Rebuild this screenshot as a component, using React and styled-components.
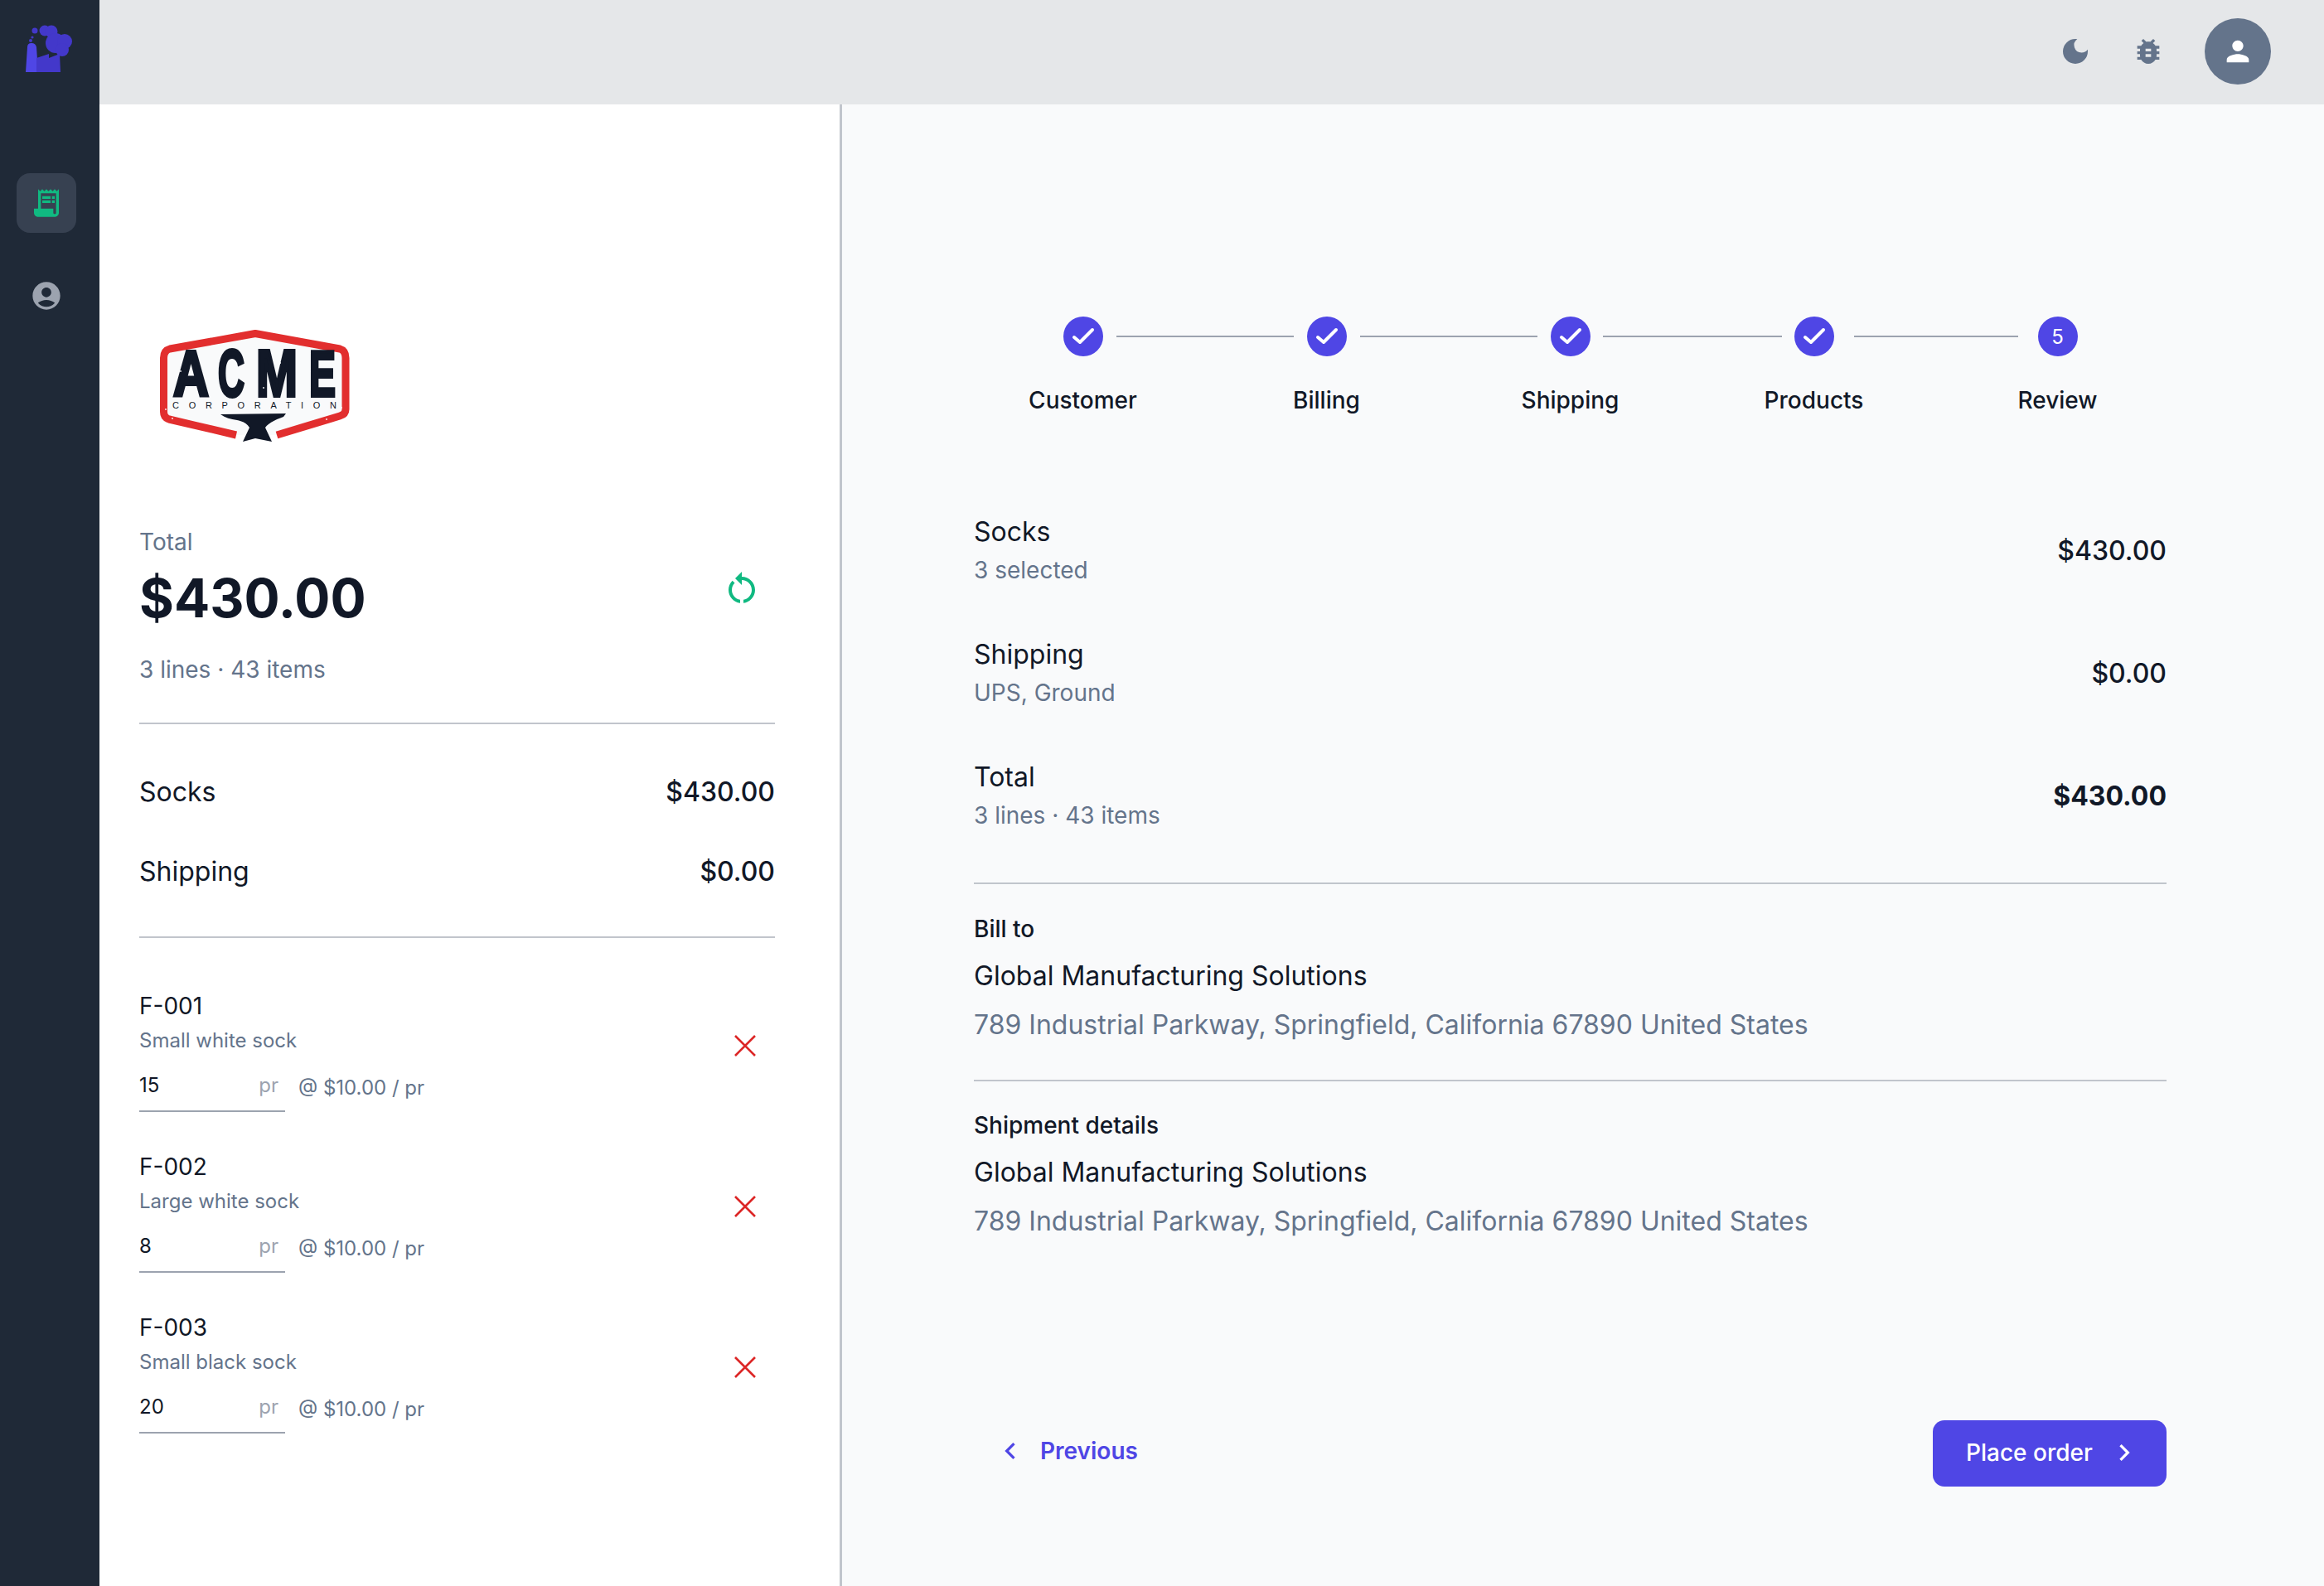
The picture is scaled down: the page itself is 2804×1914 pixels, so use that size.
import React from "react";
import styled, { createGlobalStyle } from "styled-components";
import {
  MdDarkMode,
  MdBugReport,
  MdPerson,
  MdAccountCircle,
  MdReceiptLong,
  MdRestartAlt,
  MdChevronLeft,
  MdChevronRight,
} from "react-icons/md";

const GlobalStyle = createGlobalStyle`
  html, body {
    margin: 0;
    padding: 0;
    height: 100%;
    font-family: Inter, "Liberation Sans", sans-serif;
    color: #111827;
    background: #f9fafb;
  }
  * { box-sizing: border-box; }
`;

const Shell = styled.div`
  display: flex;
  width: 2804px;
  height: 1914px;
  overflow: hidden;
`;

const Sidebar = styled.nav`
  width: 120px;
  flex-shrink: 0;
  background: #1f2937;
  display: flex;
  flex-direction: column;
  align-items: flex-start;
  padding-left: 20px;
`;

const LogoSlot = styled.div`
  height: 209px;
  width: 100%;
  padding: 30px 0 0 10px;
`;

const NavItem = styled.div`
  width: 72px;
  height: 72px;
  border-radius: 16px;
  display: flex;
  align-items: center;
  justify-content: center;
  margin-bottom: 40px;
  background: ${(p) => (p.$active ? "#374151" : "transparent")};
  color: ${(p) => (p.$active ? "#10b981" : "#9ca3af")};
  font-size: 40px;
`;

const Main = styled.div`
  flex: 1;
  display: flex;
  flex-direction: column;
  min-width: 0;
`;

const TopBar = styled.header`
  height: 126px;
  flex-shrink: 0;
  background: #e5e7e9;
  display: flex;
  align-items: center;
  justify-content: flex-end;
  padding: 0 64px 2px 0;
  color: #64748b;
`;

const TopIcon = styled.div`
  display: flex;
  font-size: 40px;
  margin-right: ${(p) => p.$mr}px;
`;

const Avatar = styled.div`
  width: 80px;
  height: 80px;
  border-radius: 50%;
  background: #64748b;
  color: #fff;
  display: flex;
  align-items: center;
  justify-content: center;
  font-size: 40px;
`;

const Columns = styled.div`
  flex: 1;
  display: flex;
  min-height: 0;
`;

const LeftPanel = styled.section`
  width: 896px;
  flex-shrink: 0;
  background: #fff;
  border-right: 3px solid #c1c5cc;
  padding: 272px 78px 0 48px;
`;

const LogoWrap = styled.div`
  height: 140px;
  margin: 0 0 96px 20px;
`;

const TotalLabel = styled.div`
  font-size: 28px;
  line-height: 40px;
  color: #64748b;
`;

const TotalRow = styled.div`
  display: flex;
  align-items: center;
  justify-content: space-between;
  padding-right: 16px;
  color: #10b981;

  svg {
    margin-bottom: 16px;
  }
`;

const TotalAmount = styled.div`
  font-size: 64px;
  line-height: 80px;
  font-weight: 700;
  color: #111827;
  margin-top: 8px;
`;

const Muted = styled.div`
  font-size: 28px;
  line-height: 40px;
  color: #64748b;
  margin-top: ${(p) => p.$mt || 0}px;
`;

const Divider = styled.hr`
  border: 0;
  height: 2px;
  background: #c1c5cc;
  margin: ${(p) => p.$m};
`;

const SummaryRow = styled.div`
  display: flex;
  justify-content: space-between;
  font-size: 32px;
  line-height: 48px;
  margin-bottom: 48px;
`;

const Amount = styled.span`
  font-weight: 500;
`;

const Line = styled.div`
  display: flex;
  justify-content: space-between;
  align-items: center;
  height: 194px;
`;

const Sku = styled.div`
  font-size: 28px;
  line-height: 40px;
`;

const Desc = styled.div`
  font-size: 24px;
  line-height: 36px;
  color: #64748b;
  margin-top: 4px;
`;

const QtyRow = styled.div`
  display: flex;
  align-items: flex-end;
  margin-top: 8px;
`;

const QtyInput = styled.div`
  width: 176px;
  height: 60px;
  border-bottom: 2px solid #9ca3af;
  display: flex;
  justify-content: space-between;
  align-items: center;
  font-size: 24px;
  padding: 0 8px 4px 0;
`;

const Unit = styled.span`
  color: #9ca3af;
`;

const Price = styled.div`
  font-size: 24px;
  line-height: 36px;
  color: #64748b;
  margin: 0 0 11px 16px;
`;

const RemoveButton = styled.button`
  border: 0;
  background: none;
  padding: 0;
  margin: 0 22px 12px 0;
  display: flex;
`;

const RightPanel = styled.section`
  flex: 1;
  background: #f9fafb;
  padding: 256px 190px 0 159px;
`;

const Stepper = styled.div`
  margin: 0 -16px;
`;

const StepDots = styled.div`
  display: flex;
  align-items: center;
  justify-content: center;
`;

const Dot = styled.div`
  width: 48px;
  height: 48px;
  border-radius: 50%;
  background: #4f46e5;
  color: #fff;
  font-size: 24px;
  display: flex;
  align-items: center;
  justify-content: center;
  flex-shrink: 0;
`;

const Connector = styled.div`
  width: ${(p) => p.$w}px;
  margin: 0 ${(p) => (246 - p.$w) / 2}px;
  height: 2px;
  background: #9ca3af;
`;

const StepLabels = styled.div`
  display: grid;
  grid-template-columns: repeat(5, 294px);
  justify-content: center;
  margin-top: 33px;
`;

const StepLabel = styled.div`
  font-size: 28px;
  line-height: 40px;
  font-weight: 500;
  text-align: center;
`;

const CostList = styled.div`
  margin-top: 88px;
`;

const CostRow = styled.div`
  display: flex;
  justify-content: space-between;
  align-items: center;
  height: 148px;
`;

const CostText = styled.div`
  padding-bottom: 4px;

  ${Muted} {
    margin-top: 2px;
  }
`;

const CostName = styled.div`
  font-size: 32px;
  line-height: 48px;
`;

const CostValue = styled.div`
  font-size: 32px;
  line-height: 48px;
  font-weight: ${(p) => (p.$bold ? 700 : 500)};
`;

const AddressTitle = styled.div`
  font-size: 28px;
  line-height: 40px;
  font-weight: 500;
`;

const AddressName = styled.div`
  font-size: 32px;
  line-height: 48px;
  margin-top: 13px;
`;

const AddressText = styled.div`
  font-size: 32px;
  line-height: 48px;
  color: #64748b;
  margin-top: 11px;
`;

const Footer = styled.div`
  display: flex;
  align-items: center;
  justify-content: space-between;
  margin-top: 216px;
`;

const PrevLink = styled.button`
  border: 0;
  background: none;
  padding: 0 0 6px 24px;
  display: flex;
  align-items: center;
  gap: 16px;
  color: #4f46e5;
  font: 600 28px/40px Inter, sans-serif;
`;

const PlaceButton = styled.button`
  width: 282px;
  height: 80px;
  border: 0;
  border-radius: 14px;
  background: #4f46e5;
  color: #fff;
  display: flex;
  align-items: center;
  padding: 0 0 2px 40px;
  gap: 18px;
  font: 500 28px/40px Inter, sans-serif;
`;

const FactoryLogo = () => (
  <svg width="60" height="62" viewBox="30 30 60 62">
    <path fill="#4f46e5" d="M31 87 L33 57 Q33 52 38 52 Q43 52 44 57 L46 87 Z" />
    <path fill="#4338ca" d="M44 87 V70 L59 65 V70 L72 65 L73 87 Z" />
    <g fill="#4338ca">
      <circle cx="42" cy="37" r="3.5" />
      <circle cx="37" cy="49" r="2" />
      <circle cx="39" cy="45" r="1.6" />
      <circle cx="54" cy="37" r="6.5" />
      <circle cx="62" cy="38" r="7.5" />
      <circle cx="67" cy="52" r="12" />
      <circle cx="78" cy="50" r="9" />
      <circle cx="75" cy="60" r="8" />
    </g>
  </svg>
);

const acmeLetters = [
  { ch: "A", x: 21, w: 43, size: 78 },
  { ch: "C", x: 75, w: 32, size: 80 },
  { ch: "M", x: 121, w: 50, size: 80 },
  { ch: "E", x: 185, w: 32, size: 78 },
];

const specks = [
  [12, 96], [20, 107], [224, 94], [206, 108], [30, 50], [90, 58], [150, 40], [200, 66], [130, 70],
];

const AcmeLogo = () => (
  <svg width="240" height="140" viewBox="0 0 240 140">
    <path
      fill="#f9fafb"
      stroke="#e22e2e"
      strokeWidth="9"
      strokeLinejoin="round"
      d="M97 127 L16 108 Q9.5 106 9.5 99 V34 Q9.5 25 17 23 L120 4.5 L222 23 Q229 25 229 34 V96 Q229 102 222 104 L146 127"
    />
    {acmeLetters.map((l) => (
      <text
        key={l.ch}
        x={l.x}
        y="80"
        fontFamily="Liberation Sans, sans-serif"
        fontWeight="700"
        fontSize={l.size}
        fill="#111827"
        stroke="#111827"
        strokeWidth="4"
        strokeLinejoin="miter"
        textLength={l.w}
        lengthAdjust="spacingAndGlyphs"
      >
        {l.ch}
      </text>
    ))}
    <text
      x="20"
      y="95"
      fontFamily="Liberation Sans, sans-serif"
      fontSize="11"
      fill="#111827"
      textLength="198"
    >
      CORPORATION
    </text>
    <path
      fill="#111827"
      d="M78 102 L157 101 L154 105 C146 108 136 112 132 118 L140 135 L120 131 L105 135 L113 118 C110 113 104 110 98 109 C90 108 84 106 78 102 Z"
    />
    <g fill="#f9fafb">
      {specks.map(([x, y]) => (
        <circle key={`${x}-${y}`} cx={x} cy={y} r="0.9" />
      ))}
    </g>
  </svg>
);

const RedX = () => (
  <svg width="28" height="28" viewBox="0 0 28 28" fill="none" stroke="#dc2626" strokeWidth="2.6">
    <path d="M2 2 L26 26 M26 2 L2 26" />
  </svg>
);

const CheckMark = () => (
  <svg
    width="30"
    height="30"
    viewBox="0 0 30 30"
    fill="none"
    stroke="#fff"
    strokeWidth="4"
    strokeLinecap="round"
    strokeLinejoin="round"
  >
    <path d="M4 16 L11 22 L26 7" />
  </svg>
);

const lines = [
  { sku: "F-001", desc: "Small white sock", qty: 15 },
  { sku: "F-002", desc: "Large white sock", qty: 8 },
  { sku: "F-003", desc: "Small black sock", qty: 20 },
];

const steps = ["Customer", "Billing", "Shipping", "Products", "Review"];
const connectorWidths = [214, 214, 216, 198];

const costs = [
  { name: "Socks", sub: "3 selected", value: "$430.00" },
  { name: "Shipping", sub: "UPS, Ground", value: "$0.00" },
  { name: "Total", sub: "3 lines · 43 items", value: "$430.00", bold: true },
];

const App = () => {
  return (
    <>
      <GlobalStyle />
      <Shell>
        <Sidebar>
          <LogoSlot>
            <FactoryLogo />
          </LogoSlot>
          <NavItem $active>
            <MdReceiptLong />
          </NavItem>
          <NavItem>
            <MdAccountCircle />
          </NavItem>
        </Sidebar>
        <Main>
          <TopBar>
            <TopIcon $mr={48}>
              <MdDarkMode />
            </TopIcon>
            <TopIcon $mr={48}>
              <MdBugReport />
            </TopIcon>
            <Avatar>
              <MdPerson />
            </Avatar>
          </TopBar>
          <Columns>
            <LeftPanel>
              <LogoWrap>
                <AcmeLogo />
              </LogoWrap>
              <TotalLabel>Total</TotalLabel>
              <TotalRow>
                <TotalAmount>$430.00</TotalAmount>
                <MdRestartAlt size={48} />
              </TotalRow>
              <Muted $mt={26}>3 lines · 43 items</Muted>
              <Divider $m="44px 0 58px" />
              <SummaryRow>
                <span>Socks</span>
                <Amount>$430.00</Amount>
              </SummaryRow>
              <SummaryRow>
                <span>Shipping</span>
                <Amount>$0.00</Amount>
              </SummaryRow>
              <Divider $m="54px 0 39px" />
              {lines.map((line) => (
                <Line key={line.sku}>
                  <div>
                    <Sku>{line.sku}</Sku>
                    <Desc>{line.desc}</Desc>
                    <QtyRow>
                      <QtyInput>
                        <span>{line.qty}</span>
                        <Unit>pr</Unit>
                      </QtyInput>
                      <Price>@ $10.00 / pr</Price>
                    </QtyRow>
                  </div>
                  <RemoveButton>
                    <RedX />
                  </RemoveButton>
                </Line>
              ))}
            </LeftPanel>
            <RightPanel>
              <Stepper>
                <StepDots>
                  {steps.map((step, idx) => (
                    <React.Fragment key={step}>
                      <Dot>{idx < 4 ? <CheckMark /> : idx + 1}</Dot>
                      {idx < 4 && <Connector $w={connectorWidths[idx]} />}
                    </React.Fragment>
                  ))}
                </StepDots>
                <StepLabels>
                  {steps.map((step) => (
                    <StepLabel key={step}>{step}</StepLabel>
                  ))}
                </StepLabels>
              </Stepper>
              <CostList>
                {costs.map((cost) => (
                  <CostRow key={cost.name}>
                    <CostText>
                      <CostName>{cost.name}</CostName>
                      <Muted>{cost.sub}</Muted>
                    </CostText>
                    <CostValue $bold={cost.bold}>{cost.value}</CostValue>
                  </CostRow>
                ))}
              </CostList>
              <Divider $m="30px 0 34px" />
              <div>
                <AddressTitle>Bill to</AddressTitle>
                <AddressName>Global Manufacturing Solutions</AddressName>
                <AddressText>789 Industrial Parkway, Springfield, California 67890 United States</AddressText>
              </div>
              <Divider $m="42px 0 33px" />
              <div>
                <AddressTitle>Shipment details</AddressTitle>
                <AddressName>Global Manufacturing Solutions</AddressName>
                <AddressText>789 Industrial Parkway, Springfield, California 67890 United States</AddressText>
              </div>
              <Footer>
                <PrevLink>
                  <MdChevronLeft size={40} />
                  Previous
                </PrevLink>
                <PlaceButton>
                  Place order
                  <MdChevronRight size={40} />
                </PlaceButton>
              </Footer>
            </RightPanel>
          </Columns>
        </Main>
      </Shell>
    </>
  );
};

export default App;
